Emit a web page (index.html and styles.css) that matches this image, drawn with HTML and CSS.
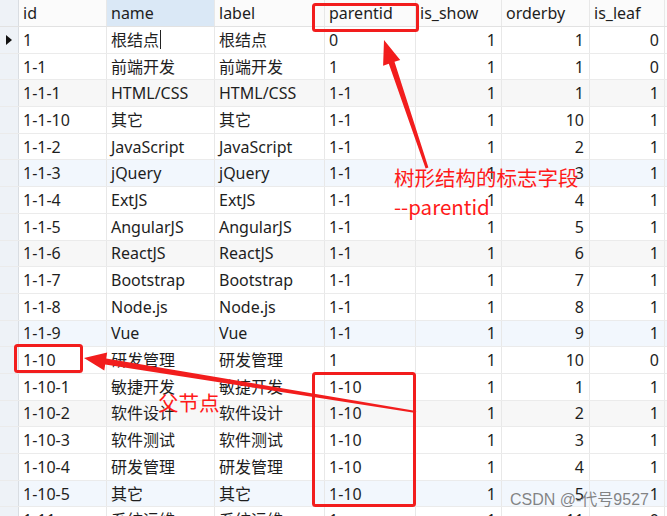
FILE: index.html
```html
<!DOCTYPE html>
<html lang="zh">
<head>
<meta charset="utf-8">
<title>tree table</title>
<link rel="stylesheet" href="styles.css">
</head>
<body>
<div class="page">
  <div class="grid">
    <div class="row head">
      <div class="cell gut"></div>
      <div class="cell">id</div>
      <div class="cell sel">name</div>
      <div class="cell">label</div>
      <div class="cell">parentid</div>
      <div class="cell">is_show</div>
      <div class="cell">orderby</div>
      <div class="cell">is_leaf</div>
      <div class="cell tail"></div>
    </div>
    <div class="row">
      <div class="cell gut"><span class="mark"></span></div>
      <div class="cell">1</div><div class="cell">根结点<span class="caret"></span></div><div class="cell">根结点</div><div class="cell">0</div>
      <div class="cell num">1</div><div class="cell num">1</div><div class="cell num">0</div><div class="cell tail"></div>
    </div>
    <div class="row">
      <div class="cell gut"></div>
      <div class="cell">1-1</div><div class="cell">前端开发</div><div class="cell">前端开发</div><div class="cell">1</div>
      <div class="cell num">1</div><div class="cell num">1</div><div class="cell num">0</div><div class="cell tail"></div>
    </div>
    <div class="row gray">
      <div class="cell gut"></div>
      <div class="cell">1-1-1</div><div class="cell">HTML/CSS</div><div class="cell">HTML/CSS</div><div class="cell">1-1</div>
      <div class="cell num">1</div><div class="cell num">1</div><div class="cell num">1</div><div class="cell tail"></div>
    </div>
    <div class="row">
      <div class="cell gut"></div>
      <div class="cell">1-1-10</div><div class="cell">其它</div><div class="cell">其它</div><div class="cell">1-1</div>
      <div class="cell num">1</div><div class="cell num">10</div><div class="cell num">1</div><div class="cell tail"></div>
    </div>
    <div class="row">
      <div class="cell gut"></div>
      <div class="cell">1-1-2</div><div class="cell">JavaScript</div><div class="cell">JavaScript</div><div class="cell">1-1</div>
      <div class="cell num">1</div><div class="cell num">2</div><div class="cell num">1</div><div class="cell tail"></div>
    </div>
    <div class="row blue">
      <div class="cell gut"></div>
      <div class="cell">1-1-3</div><div class="cell">jQuery</div><div class="cell">jQuery</div><div class="cell">1-1</div>
      <div class="cell num">1</div><div class="cell num">3</div><div class="cell num">1</div><div class="cell tail"></div>
    </div>
    <div class="row">
      <div class="cell gut"></div>
      <div class="cell">1-1-4</div><div class="cell">ExtJS</div><div class="cell">ExtJS</div><div class="cell">1-1</div>
      <div class="cell num">1</div><div class="cell num">4</div><div class="cell num">1</div><div class="cell tail"></div>
    </div>
    <div class="row">
      <div class="cell gut"></div>
      <div class="cell">1-1-5</div><div class="cell">AngularJS</div><div class="cell">AngularJS</div><div class="cell">1-1</div>
      <div class="cell num">1</div><div class="cell num">5</div><div class="cell num">1</div><div class="cell tail"></div>
    </div>
    <div class="row gray">
      <div class="cell gut"></div>
      <div class="cell">1-1-6</div><div class="cell">ReactJS</div><div class="cell">ReactJS</div><div class="cell">1-1</div>
      <div class="cell num">1</div><div class="cell num">6</div><div class="cell num">1</div><div class="cell tail"></div>
    </div>
    <div class="row">
      <div class="cell gut"></div>
      <div class="cell">1-1-7</div><div class="cell">Bootstrap</div><div class="cell">Bootstrap</div><div class="cell">1-1</div>
      <div class="cell num">1</div><div class="cell num">7</div><div class="cell num">1</div><div class="cell tail"></div>
    </div>
    <div class="row">
      <div class="cell gut"></div>
      <div class="cell">1-1-8</div><div class="cell">Node.js</div><div class="cell">Node.js</div><div class="cell">1-1</div>
      <div class="cell num">1</div><div class="cell num">8</div><div class="cell num">1</div><div class="cell tail"></div>
    </div>
    <div class="row blue">
      <div class="cell gut"></div>
      <div class="cell">1-1-9</div><div class="cell">Vue</div><div class="cell">Vue</div><div class="cell">1-1</div>
      <div class="cell num">1</div><div class="cell num">9</div><div class="cell num">1</div><div class="cell tail"></div>
    </div>
    <div class="row">
      <div class="cell gut"></div>
      <div class="cell">1-10</div><div class="cell">研发管理</div><div class="cell">研发管理</div><div class="cell">1</div>
      <div class="cell num">1</div><div class="cell num">10</div><div class="cell num">0</div><div class="cell tail"></div>
    </div>
    <div class="row">
      <div class="cell gut"></div>
      <div class="cell">1-10-1</div><div class="cell">敏捷开发</div><div class="cell">敏捷开发</div><div class="cell">1-10</div>
      <div class="cell num">1</div><div class="cell num">1</div><div class="cell num">1</div><div class="cell tail"></div>
    </div>
    <div class="row gray">
      <div class="cell gut"></div>
      <div class="cell">1-10-2</div><div class="cell">软件设计</div><div class="cell">软件设计</div><div class="cell">1-10</div>
      <div class="cell num">1</div><div class="cell num">2</div><div class="cell num">1</div><div class="cell tail"></div>
    </div>
    <div class="row">
      <div class="cell gut"></div>
      <div class="cell">1-10-3</div><div class="cell">软件测试</div><div class="cell">软件测试</div><div class="cell">1-10</div>
      <div class="cell num">1</div><div class="cell num">3</div><div class="cell num">1</div><div class="cell tail"></div>
    </div>
    <div class="row">
      <div class="cell gut"></div>
      <div class="cell">1-10-4</div><div class="cell">研发管理</div><div class="cell">研发管理</div><div class="cell">1-10</div>
      <div class="cell num">1</div><div class="cell num">4</div><div class="cell num">1</div><div class="cell tail"></div>
    </div>
    <div class="row blue">
      <div class="cell gut"></div>
      <div class="cell">1-10-5</div><div class="cell">其它</div><div class="cell">其它</div><div class="cell">1-10</div>
      <div class="cell num">1</div><div class="cell num">5</div><div class="cell num">1</div><div class="cell tail"></div>
    </div>
    <div class="row">
      <div class="cell gut"></div>
      <div class="cell">1-11</div><div class="cell">系统运维</div><div class="cell">系统运维</div><div class="cell">1</div>
      <div class="cell num">1</div><div class="cell num">11</div><div class="cell num">0</div><div class="cell tail"></div>
    </div>
  </div>

  <svg class="marks" width="667" height="516" viewBox="0 0 667 516">
    <rect x="313.5" y="4.5" width="104" height="26" rx="2" fill="none" stroke="#f21d1d" stroke-width="3"/>
    <rect x="15.5" y="345.5" width="66" height="26" rx="2" fill="none" stroke="#f21d1d" stroke-width="3"/>
    <rect x="313.5" y="373.5" width="101" height="132" rx="2" fill="none" stroke="#f21d1d" stroke-width="3"/>
    <polygon fill="#f21d1d" points="384,40 400.2,59.9 394.5,61.8 428.4,167.5 425.6,168.5 388.8,63.8 383.1,65.7"/>
    <polygon fill="#f21d1d" points="84,358 107.2,352.6 106.2,358.5 416.2,411 415.8,413 105.2,364.5 104.3,370.4"/>
  </svg>
  <div class="note note-tree">树形结构的标志字段<br>--parentid</div>
  <div class="note note-parent">父节点</div>
  <div class="wm">CSDN @-代号9527</div>
</div>
</body>
</html>
```
FILE: styles.css
```css
html, body {
  margin: 0;
  padding: 0;
  background: #ffffff;
}
.page {
  position: relative;
  width: 667px;
  height: 516px;
  overflow: hidden;
  font-family: "Noto Sans", "Noto Sans CJK SC", sans-serif;
  font-size: 16px;
  color: #1e1e1e;
}
.grid {
  display: flex;
  flex-direction: column;
}
.row {
  display: grid;
  grid-template-columns: 19px 88px 108px 110px 91px 86px 88px 75px 2px;
  height: 26.7px;
  box-sizing: border-box;
  border-bottom: 1px solid #ebebeb;
  background: #ffffff;
}
.row.head {
  height: 27px;
  background: #fbfbfb;
  border-bottom: 1px solid #e2e2e2;
}
.row.gray { background: #f7f7f7; }
.row.blue { background: #f2f7fd; }
.cell {
  position: relative;
  display: flex;
  align-items: center;
  padding: 0 4px;
  border-right: 1px solid #e8e8e8;
  white-space: nowrap;
  overflow: hidden;
  line-height: 1;
}
.cell.num {
  justify-content: flex-end;
  padding-right: 5px;
}
.cell.gut {
  padding: 0;
  background: #eef2f7;
  border-right: 1px solid #d9dde2;
}
.cell.tail {
  padding: 0;
  border-right: none;
}
.cell.sel {
  background: #dae8f6;
}
.mark {
  display: block;
  width: 0;
  height: 0;
  margin-left: 6px;
  border-top: 5px solid transparent;
  border-bottom: 5px solid transparent;
  border-left: 6px solid #111;
}
.caret {
  display: inline-block;
  width: 1px;
  height: 19px;
  background: #222;
  margin-left: 1px;
}
.marks {
  position: absolute;
  left: 0;
  top: 0;
}
.note {
  position: absolute;
  color: #ff1a1a;
  font-size: 20.5px;
  line-height: 29px;
  font-family: "Noto Sans CJK SC", "Noto Sans", sans-serif;
}
.note-tree {
  left: 394px;
  top: 163px;
}
.note-parent {
  left: 158px;
  top: 388px;
}
.wm {
  position: absolute;
  left: 510px;
  top: 486px;
  font-family: "Liberation Sans", "Noto Sans CJK SC", sans-serif;
  font-size: 16px;
  color: rgba(110, 110, 110, 0.85);
}
```
